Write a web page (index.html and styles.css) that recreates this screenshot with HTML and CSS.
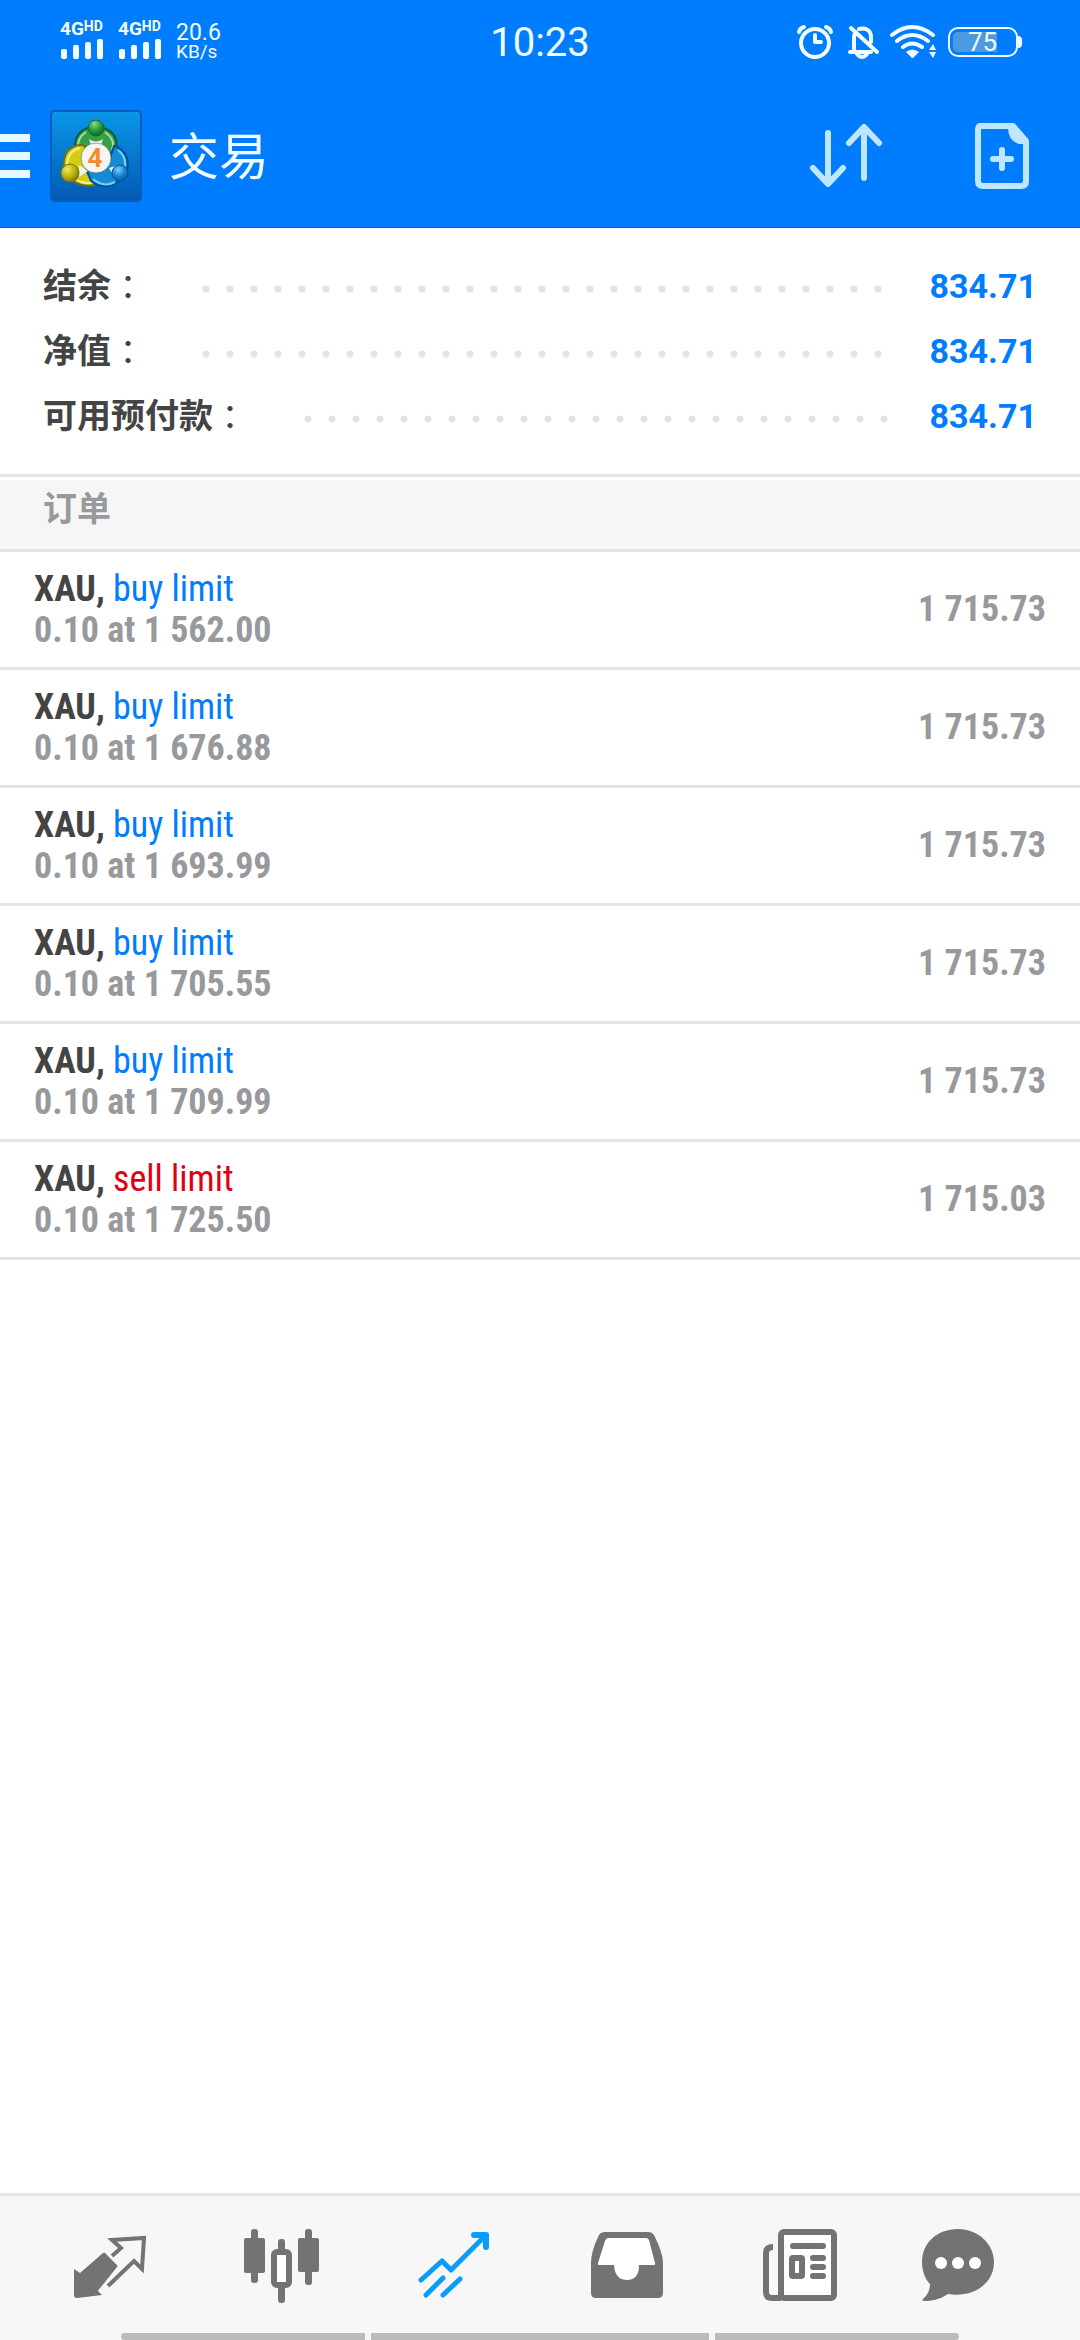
FILE: index.html
```html
<!DOCTYPE html>
<html lang="zh-CN">
<head>
<meta charset="utf-8">
<meta name="viewport" content="width=device-width, initial-scale=1">
<title>交易</title>
<link rel="stylesheet" href="styles.css">
</head>
<body>
<div class="app">
  <header class="top">
    <div class="status">
      <div class="status-left">
        <div class="signal">
          <div class="network"><span class="net">4G</span><span class="hd">HD</span></div>
          <svg class="strength" viewBox="60 37 48 20" aria-hidden="true"><rect x="61" y="47" width="6" height="10" rx="2"/><rect x="73" y="43" width="6" height="14" rx="2"/><rect x="85" y="40" width="6" height="17" rx="2"/><rect x="97" y="37" width="6" height="20" rx="2"/></svg>
        </div>
        <div class="signal">
          <div class="network"><span class="net">4G</span><span class="hd">HD</span></div>
          <svg class="strength" viewBox="60 37 48 20" aria-hidden="true"><rect x="61" y="47" width="6" height="10" rx="2"/><rect x="73" y="43" width="6" height="14" rx="2"/><rect x="85" y="40" width="6" height="17" rx="2"/><rect x="97" y="37" width="6" height="20" rx="2"/></svg>
        </div>
        <div class="speed"><span class="rate">20.6</span><span class="unit">KB/s</span></div>
      </div>
      <time class="clock">10:23</time>
      <div class="status-right">
        <svg class="status-icons" viewBox="796 20 142 44" aria-hidden="true" fill="none" stroke="#f2fbff" stroke-width="4" stroke-linecap="round" stroke-linejoin="round">
          <ellipse cx="815" cy="43" rx="14" ry="14"/>
          <path d="M815 35v7h6"/>
          <path d="M799 32q1-4 5-5M831 32q-1-4-5-5"/>
          <path d="M850 52h21M854 51V38q0-4 2-6M859 29q4-1 7 0q5 2 5 8v5M857 54q5 6 10 0M851 28l26 24"/>
          <path d="M892 35q20-16 41 0M897 41q15-12 31 0M903 47q9-7 19 0"/>
          <path d="M906 52q6-5 13 0l-6 6h-1z" fill="#f2fbff" stroke="none"/>
          <path d="M929 50h7l-3-6zM929 52h7l-3 6z" fill="#f2fbff" stroke="none"/>
        </svg>
        <div class="battery"><span class="battery-level">75</span></div>
      </div>
    </div>
    <div class="bar">
      <button class="menu" type="button" aria-label="菜单"><svg viewBox="0 0 30 44"><path d="M0 0h30v8H0zM0 18h30v8H0zM0 36h30v8H0z"/></svg></button>
      <svg class="logo" viewBox="0 0 92 92" aria-hidden="true">
        <defs>
          <linearGradient id="sq" x1="0" y1="0" x2="0" y2="1"><stop offset="0" stop-color="#0a97ea"/><stop offset="1" stop-color="#0359b4"/></linearGradient>
          <radialGradient id="gn" cx=".4" cy=".25" r=".8"><stop offset="0" stop-color="#8fd391"/><stop offset=".5" stop-color="#2c9a3a"/><stop offset="1" stop-color="#0a6420"/></radialGradient>
          <radialGradient id="yl" cx=".35" cy=".3" r=".8"><stop offset="0" stop-color="#eeea5a"/><stop offset=".5" stop-color="#bdb50c"/><stop offset="1" stop-color="#6f7200"/></radialGradient>
          <radialGradient id="bl" cx=".4" cy=".3" r=".8"><stop offset="0" stop-color="#7cd0f7"/><stop offset=".5" stop-color="#1387d2"/><stop offset="1" stop-color="#04508f"/></radialGradient>
        </defs>
        <rect x="1" y="1" width="90" height="90" rx="4" fill="url(#sq)" stroke="#0a5cb9" stroke-width="2"/>
        <path d="M38 18C27 21 22 33 27 43h36c8-9 2-22-10-25z" fill="#35a048" stroke="#0b5e35" stroke-width="2"/>
        <path d="M36 22q-9 6-8 16M55 22q11 8 7 18" fill="none" stroke="#a7dba7" stroke-width="2"/>
        <path d="M33 35C20 34 12 44 14 58c5 14 17 20 31 17l4-24z" fill="#d5cc13" stroke="#68701a" stroke-width="2"/>
        <path d="M30 38q-13 3-13 19M27 70q8 5 16 2" fill="none" stroke="#f6f08b" stroke-width="2"/>
        <path d="M64 36c14 4 18 20 9 31-8 10-22 12-32 4L36 59l22-5z" fill="#168bd5" stroke="#064e92" stroke-width="2"/>
        <path d="M68 40q10 8 6 20M43 69q10 9 22 3" fill="none" stroke="#78cef4" stroke-width="2"/>
        <path d="M39 29q7 5 14 0l-2 6H41zM29 55l9 6-9 6zM69 55l-10 3 5 8z" fill="#eef6f2"/>
        <circle cx="46" cy="18" r="8" fill="url(#gn)" stroke="#0b6932" stroke-width="1"/>
        <circle cx="20" cy="63" r="9" fill="url(#yl)" stroke="#70751a" stroke-width="1"/>
        <circle cx="70" cy="63" r="8" fill="url(#bl)" stroke="#064e92" stroke-width="1"/>
        <circle cx="46" cy="48" r="15" fill="#f7f5f1" stroke="#375c37" stroke-opacity=".5"/>
        <text class="logo-mark" x="45" y="57" text-anchor="middle">4</text>
      </svg>
      <h1 class="title">交易</h1>
      <button class="action" type="button" aria-label="排序">
        <svg viewBox="808 122 76 68" fill="none" stroke="#bfe6ff" stroke-width="6" stroke-linecap="round" stroke-linejoin="round">
          <path d="M828 133v49M864 178v-49"/><path d="M813 168l15 16 15-16M849 143l15-16 15 16"/>
        </svg>
      </button>
      <button class="action" type="button" aria-label="新订单">
        <svg viewBox="964 122 76 68" fill="none" stroke="#bfe6ff" stroke-width="6" stroke-linejoin="round" stroke-linecap="round">
          <path d="M980 126h33l13 15v40q0 5-5 5h-38q-5 0-5-5v-50q0-5 2-5z"/>
          <path d="M1008 127h8l12 14v3h-9q-11-3-11-17z" fill="#bfe6ff" stroke="none"/>
          <path d="M1002 150v18M993 159h18"/>
        </svg>
      </button>
    </div>
  </header>

  <main class="content">
    <dl class="summary">
      <div class="sum-row"><dt>结余<span class="colon">：</span></dt><dd>834.71</dd></div>
      <div class="sum-row"><dt>净值<span class="colon">：</span></dt><dd>834.71</dd></div>
      <div class="sum-row"><dt>可用预付款<span class="colon">：</span></dt><dd>834.71</dd></div>
    </dl>
    <h2 class="section">订单</h2>
    <ul class="orders">
      <li class="order"><div><p class="line"><b>XAU,</b> <span class="buy">buy limit</span></p><p class="line detail">0.10 at 1 562.00</p></div><span class="price">1 715.73</span></li>
      <li class="order"><div><p class="line"><b>XAU,</b> <span class="buy">buy limit</span></p><p class="line detail">0.10 at 1 676.88</p></div><span class="price">1 715.73</span></li>
      <li class="order"><div><p class="line"><b>XAU,</b> <span class="buy">buy limit</span></p><p class="line detail">0.10 at 1 693.99</p></div><span class="price">1 715.73</span></li>
      <li class="order"><div><p class="line"><b>XAU,</b> <span class="buy">buy limit</span></p><p class="line detail">0.10 at 1 705.55</p></div><span class="price">1 715.73</span></li>
      <li class="order"><div><p class="line"><b>XAU,</b> <span class="buy">buy limit</span></p><p class="line detail">0.10 at 1 709.99</p></div><span class="price">1 715.73</span></li>
      <li class="order"><div><p class="line"><b>XAU,</b> <span class="sell">sell limit</span></p><p class="line detail">0.10 at 1 725.50</p></div><span class="price">1 715.03</span></li>
    </ul>
  </main>

  <footer class="bottom">
    <nav class="tabs">
      <a href="#quotes" aria-label="行情"><svg viewBox="50 2224 120 84">
        <path d="M103 2253q1-1 2 0l12 12q1 1 0 2l-16 20q-3 3-3 4l4 4-25 3q-3 0-3-3v-26l6 4z"/>
        <path d="M112 2256l9-8-9-8 32-2-2 31-8-8-26 25" fill="none" stroke="#737373" stroke-width="4"/>
      </svg></a>
      <a href="#chart" aria-label="图表"><svg viewBox="222 2224 120 84">
        <rect x="244" y="2238" width="21" height="35" rx="2"/><rect x="251" y="2229" width="7" height="54" rx="3"/>
        <rect x="298" y="2238" width="21" height="34" rx="2"/><rect x="305" y="2229" width="7" height="56" rx="3"/>
        <rect x="278" y="2239" width="7" height="14" rx="3"/><rect x="278" y="2284" width="7" height="19" rx="3"/>
        <rect x="274" y="2252" width="15" height="33" rx="3" fill="#fff" stroke="#737373" stroke-width="6"/>
      </svg></a>
      <a href="#trade" aria-label="交易" aria-current="page"><svg viewBox="394 2224 120 84" fill="none" stroke="#0a9bff" stroke-width="5" stroke-linecap="round" stroke-linejoin="round">
        <path d="M421 2280l21-19 9 9 34-34M426 2295l17-17M443 2295l17-16"/><path d="M474 2235h12v12" stroke-width="6"/>
      </svg></a>
      <a href="#history" aria-label="历史"><svg viewBox="566 2224 120 84">
        <path d="M605 2232h43q4 0 6 3 9 18 9 28v30q0 5-5 5h-62q-5 0-5-5v-30q0-12 8-28 2-3 6-3z"/>
        <path d="M608 2238h38q2 0 3 2l6 23q1 2-2 2h-14q0 15-12 15t-13-15h-14q-3 0-2-2l7-22q1-3 3-3z" fill="#fff"/>
      </svg></a>
      <a href="#news" aria-label="新闻"><svg viewBox="738 2224 120 84" fill="none" stroke="#737373" stroke-width="6" stroke-linecap="round">
        <rect x="781" y="2232" width="53" height="66" rx="3" fill="#fff"/>
        <path d="M773 2247q-7 0-7 6v39q0 6 6 6h9" stroke-linecap="butt"/>
        <path d="M793 2246h30M813 2258h10M813 2267h10M813 2276h10"/>
        <rect x="792" y="2258" width="10" height="18" rx="1" fill="#fff" stroke-linejoin="round"/>
      </svg></a>
      <a href="#chat" aria-label="消息"><svg viewBox="910 2224 120 84">
        <path d="M958 2229c20 0 36 15 36 33 0 22-21 36-46 32-9 6-17 7-23 7q-4 0-2-2 7-6 7-15c-5-5-8-13-8-22 0-19 15-33 36-33z"/>
        <circle cx="941" cy="2263" r="6" fill="#fff"/><circle cx="958" cy="2263" r="6" fill="#fff"/><circle cx="975" cy="2263" r="6" fill="#fff"/>
      </svg></a>
    </nav>
    <div class="gesture" aria-hidden="true"><i></i><i></i><i></i></div>
  </footer>
</div>
</body>
</html>
```
FILE: styles.css
```css
* { box-sizing: border-box; }
body, h1, h2, p, dl, dd, ul { margin: 0; padding: 0; }
body {
  background: #fff;
  color: #444;
  font-family: Roboto, "Noto Sans CJK SC", sans-serif;
}
svg { display: block; }
button { border: 0; padding: 0; background: none; cursor: pointer; }
.app { display: flex; flex-direction: column; min-height: 100vh; }

/* Status bar and title bar */
.top {
  background: #007dff;
  color: #f2fbff;
  border-bottom: 1px solid #0068dc;
}
.status {
  display: grid;
  grid-template-columns: 1fr auto 1fr;
  align-items: center;
  height: 84px;
  padding: 0 60px;
}
.status-left, .status-right { display: flex; align-items: center; }
.status-left { gap: 10px; }
.status-right { justify-content: flex-end; gap: 10px; padding-right: 2px; }
.signal { width: 48px; padding-bottom: 6px; }
.network { display: flex; align-items: flex-start; font-weight: 700; }
.net { font-size: 19px; line-height: 20px; }
.hd { font-size: 14px; line-height: 14px; }
.strength { width: 48px; height: 20px; fill: #f2fbff; }
.speed { display: flex; flex-direction: column; line-height: 19px; }
.rate { font-size: 23px; }
.unit { font-size: 19px; }
.clock { font-size: 40px; line-height: 48px; padding-top: 2px; }
.status-icons { width: 142px; height: 44px; }
.battery {
  position: relative;
  width: 70px;
  height: 30px;
  padding: 3px;
  border: 2px solid #f2fbff;
  border-radius: 10px;
}
.battery::after {
  content: "";
  position: absolute;
  top: 7px;
  right: -6px;
  width: 4px;
  height: 12px;
  border-radius: 0 4px 4px 0;
  background: #f2fbff;
}
.battery-level {
  display: block;
  width: 44px;
  padding-left: 15px;
  border-radius: 5px 0 0 5px;
  background: #4c9be0;
  font-size: 26px;
  line-height: 20px;
}
.bar {
  display: flex;
  align-items: center;
  height: 143px;
  padding-right: 40px;
}
.menu svg { width: 30px; height: 44px; fill: #e6f8ff; }
.logo { width: 92px; height: 92px; margin-left: 20px; }
.logo-mark { font: 700 26px Roboto, sans-serif; fill: #f08a2c; }
.title { flex: 1; margin-left: 27px; padding-top: 4px; font-size: 50px; font-weight: 400; line-height: 64px; }
.action svg { width: 76px; height: 68px; }
.action + .action { margin-left: 80px; }

/* Account summary */
.content { flex: 1; }
.summary { padding: 25px 43px 26px; border-bottom: 3px solid #e4e4e4; }
.sum-row { display: flex; align-items: center; height: 65px; font-size: 34px; }
.sum-row dt { display: flex; flex: 1; align-items: center; font-weight: 700; line-height: 50px; }
.sum-row dt::after {
  content: "";
  flex: 1;
  height: 8px;
  margin: 6px 32px 0 49px;
  background: radial-gradient(circle, #e3e3e3 3px, transparent 4px) 0 0 / 24px 8px;
}
.colon { font-family: "Noto Sans CJK TC", sans-serif; font-weight: 400; }
.sum-row dd { color: #007dff; font-weight: 700; }
.section {
  margin-top: 3px;
  padding: 4px 43px 15px;
  background: #f6f6f6;
  border-bottom: 3px solid #e4e4e4;
  color: #97999c;
  font-size: 34px;
  font-weight: 700;
  line-height: 50px;
}

/* Orders */
.orders {
  list-style: none;
  font-family: "Roboto Condensed", "Liberation Sans Narrow", Roboto, sans-serif;
  font-size: 36px;
  line-height: 41px;
}
.order {
  display: flex;
  align-items: center;
  justify-content: space-between;
  height: 118px;
  padding: 0 34px;
  border-bottom: 3px solid #e4e4e4;
}
.buy { color: #007dff; }
.sell { color: #e00012; }
.detail, .price { color: #97999c; font-weight: 700; }

/* Tab bar */
.bottom { background: #f7f7f7; border-top: 3px solid #e4e4e4; }
.tabs { display: grid; grid-template-columns: repeat(6, 1fr); padding: 28px 24px 25px; }
.tabs a { display: flex; justify-content: center; }
.tabs svg { width: 120px; height: 84px; fill: #737373; }
.tabs svg[fill="none"] { fill: none; }
.gesture { display: flex; justify-content: center; gap: 6px; }
.gesture i { width: 244px; height: 7px; background: #bbb; }
.gesture i:nth-child(2) { width: 338px; }
.gesture i:first-child { border-radius: 4px 0 0 4px; }
.gesture i:last-child { border-radius: 0 4px 4px 0; }
```
